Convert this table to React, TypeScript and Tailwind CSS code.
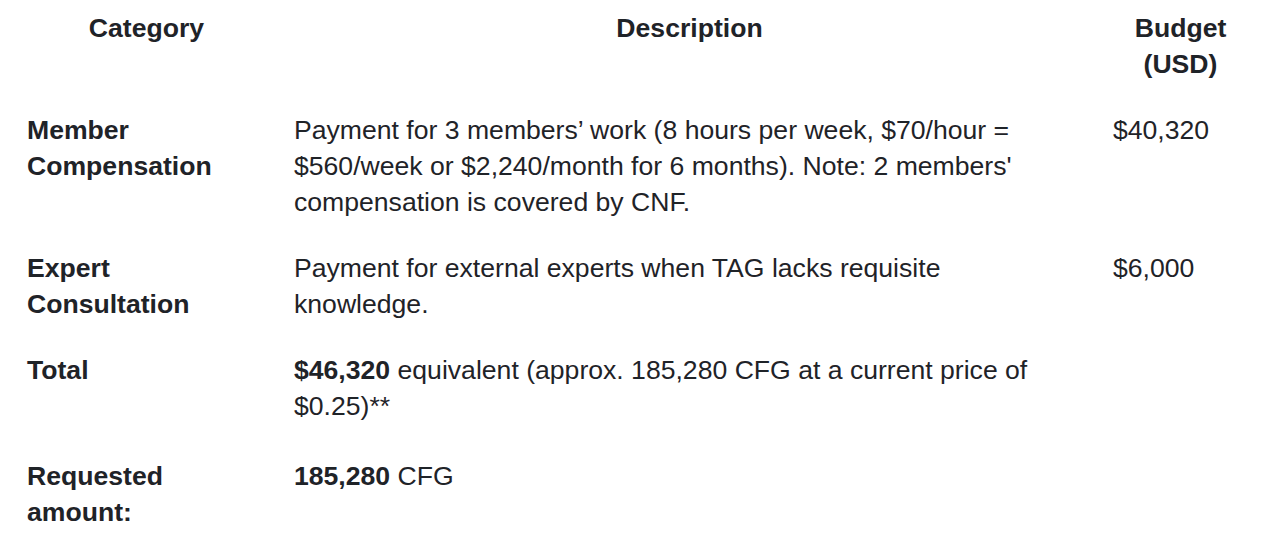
import React from "react";

const cols = "grid grid-cols-[267px_819px_163px]";

export default function App() {
  return (
    <div
      className="w-[1266px] h-[544px] overflow-hidden bg-white text-[#1f2328] text-[26.6px] leading-[36px]"
      style={{ fontFamily: '"Liberation Sans", Arial, Helvetica, sans-serif' }}
    >
      <div className="pl-[13px]">
        <div className={`${cols} font-bold text-center`}>
          <div className="px-[14px] pt-[10px] pb-[15px]">Category</div>
          <div className="px-[14px] pt-[10px] pb-[15px]">Description</div>
          <div className="px-[14px] pt-[10px] pb-[15px]">Budget (USD)</div>
        </div>
        <div className={cols}>
          <div className="px-[14px] py-[15px] font-bold">Member Compensation</div>
          <div className="pl-[14px] pr-[24px] py-[15px]">
            Payment for 3 members’ work (8 hours per week, $70/hour = $560/week or $2,240/month for 6 months). Note: 2 members' compensation is covered by CNF.
          </div>
          <div className="px-[14px] py-[15px]">$40,320</div>
        </div>
        <div className={cols}>
          <div className="px-[14px] py-[15px] font-bold">Expert Consultation</div>
          <div className="pl-[14px] pr-[24px] py-[15px]">
            Payment for external experts when TAG lacks requisite knowledge.
          </div>
          <div className="px-[14px] py-[15px]">$6,000</div>
        </div>
        <div className={cols}>
          <div className="px-[14px] py-[15px] font-bold">Total</div>
          <div className="pl-[14px] pr-[24px] py-[15px]">
            <strong>$46,320</strong> equivalent (approx. 185,280 CFG at a current price of $0.25)**
          </div>
          <div className="px-[14px] py-[15px]"></div>
        </div>
        <div className={cols}>
          <div className="px-[14px] pt-[19px] pb-[15px] font-bold">Requested amount:</div>
          <div className="pl-[14px] pr-[24px] pt-[19px] pb-[15px]">
            <strong>185,280</strong> CFG
          </div>
          <div className="px-[14px] pt-[19px] pb-[15px]"></div>
        </div>
      </div>
    </div>
  );
}
